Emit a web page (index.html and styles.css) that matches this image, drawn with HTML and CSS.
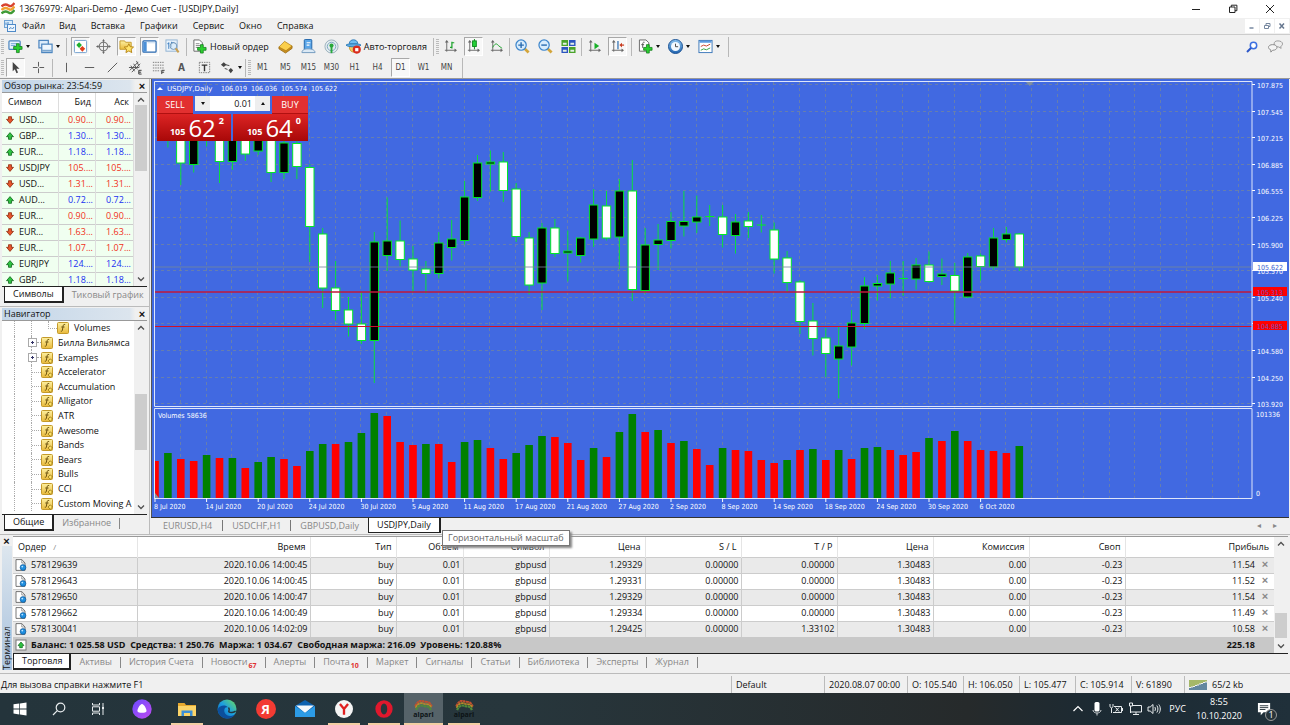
FILE: index.html
```html
<!DOCTYPE html>
<html lang="ru">
<head>
<meta charset="utf-8">
<title>13676979: Alpari-Demo - Демо Счет - [USDJPY,Daily]</title>
<link rel="stylesheet" href="styles.css">
</head>
<body>
<svg class="defs" aria-hidden="true">
  <defs>
    <linearGradient id="gy" x1="0" y1="0" x2="0" y2="1"><stop offset="0" stop-color="#fdf0a0"/><stop offset="1" stop-color="#e9b93a"/></linearGradient>
    <linearGradient id="gb" x1="0" y1="0" x2="0" y2="1"><stop offset="0" stop-color="#8cc4f0"/><stop offset="1" stop-color="#1f63b0"/></linearGradient>
    <linearGradient id="edge" x1="0" y1="1" x2="1" y2="0"><stop offset="0" stop-color="#0b59a8"/><stop offset=".5" stop-color="#1b9de2"/><stop offset="1" stop-color="#6fe05a"/></linearGradient>
    <linearGradient id="alice" x1="0" y1="0" x2="1" y2="1"><stop offset="0" stop-color="#6a4bff"/><stop offset="1" stop-color="#c04bf0"/></linearGradient>
    <symbol id="down" viewBox="0 0 8 8"><path d="M2.5.7h3v2.6h2L4 7.4.5 3.300h2z" fill="#e8542a" stroke="#8f2c10" stroke-width=".8" stroke-linejoin="round"/></symbol>
    <symbol id="up" viewBox="0 0 8 8"><path d="M2.500 7.300h3V4.700h2L4 .6.5 4.700h2z" fill="#2fc442" stroke="#11661c" stroke-width=".8" stroke-linejoin="round"/></symbol>
    <symbol id="fx" viewBox="0 0 12 12"><rect x=".5" y=".5" width="11" height="11" rx="1" fill="url(#gy)" stroke="#c49a2b"/><path d="M8.200 2.600c-1.800-.6-2 .6-2.200 2L5.400 8c-.2 1.200-.8 1.500-1.600 1.200M4.300 5h3.200" fill="none" stroke="#6e5410" stroke-width="1"/></symbol>
    <symbol id="fo" viewBox="0 0 12 12"><use href="#fx"/><path d="M9.300 6.800l2.200 2.200-2.200 2.200L7.100 9z" fill="#ffe468" stroke="#8a6a10" stroke-width=".8"/></symbol>
    <symbol id="doc" viewBox="0 0 12 12"><path d="M1 .6h5.800L10 4v7.400H1z" fill="#fff" stroke="#555" stroke-width=".8"/><path d="M6.800.6V4H10" fill="none" stroke="#777" stroke-width=".7"/><circle cx="8" cy="8.500" r="2.900" fill="#1f8fe0" stroke="#0c4e8a" stroke-width=".6"/><circle cx="7.300" cy="7.600" r=".9" fill="#bfe4ff"/></symbol>
    <symbol id="axes" viewBox="0 0 14 14"><path d="M3 2v10.500M1 11h11.500" stroke="#666"/><path d="M3 0L1 2.700h4zM14 11l-2.700-2v4z" fill="#666"/></symbol>
    <symbol id="wave" viewBox="0 0 14 14"><path d="M.5 4.500C3 2 5 2 7.500 3.500S11 4 13.500 1" stroke="#d8432f" stroke-width="2.400" fill="none"/><path d="M.5 8C3 5.500 5 5.500 7.500 7s3.500.5 6-2.500" stroke="#f0a030" stroke-width="2.400" fill="none"/><path d="M.5 11.500C3 9 5 9 7.500 10.500s3.500.5 6-2.500" stroke="#3f9a35" stroke-width="2.400" fill="none"/></symbol>
    <symbol id="alpari" viewBox="0 0 20 12"><path d="M1 7C4 0 8 0 10 1.500S16 0 19 7" stroke="#c05030" stroke-width="2.200" fill="none" stroke-dasharray="3 .5"/><path d="M1.500 8.500C4 2.800 8 2.800 10 4s6-1.200 8.500 4.500" stroke="#b88a2a" stroke-width="2" fill="none" stroke-dasharray="3 .5"/><path d="M2 11C4 5.500 8 5.500 10 6.500S16 5.500 18 11" stroke="#4f8a3a" stroke-width="2.400" fill="none" stroke-dasharray="3 .5"/></symbol>
  </defs>
</svg>

<header class="titlebar">
  <svg class="i14"><use href="#wave"/></svg>
  <h1>13676979: Alpari-Demo - Демо Счет - [USDJPY,Daily]</h1>
  <button aria-label="Свернуть"><svg class="i12" viewBox="0 0 12 12"><path d="M2 6.500h8" stroke="#222"/></svg></button>
  <button aria-label="Восстановить"><svg class="i12" viewBox="0 0 12 12"><path d="M2.500 4h5.500v5.500H2.500zM4.300 4V2.200h5.600v5.500H8" fill="none" stroke="#222"/></svg></button>
  <button aria-label="Закрыть"><svg class="i12" viewBox="0 0 12 12"><path d="M2 2l8 8M10 2l-8 8" stroke="#222"/></svg></button>
</header>

<nav class="menubar">
  <svg class="i12" viewBox="0 0 12 12"><rect x=".5" y=".5" width="8" height="7" fill="#d9ebfa" stroke="#6fa2d4"/><rect x="3.500" y="4.500" width="8" height="7" fill="#eef6fd" stroke="#4f8ac8"/><path d="M5 9l2-1.500 1.500 1.500L10 7M2 5V2.500M4 4V2" stroke="#4f8ac8" fill="none"/></svg>
  <button class="m1">Файл</button><button>Вид</button><button>Вставка</button><button>Графики</button><button>Сервис</button><button>Окно</button><button>Справка</button>
  <span class="grow"></span>
  <button class="mdi" aria-label="Свернуть окно"><svg class="i8" viewBox="0 0 8 8"><path d="M1.500 6h4" stroke="#7788a0" stroke-width="1.500"/></svg></button>
  <button class="mdi" aria-label="Восстановить окно"><svg class="i8" viewBox="0 0 8 8"><path d="M1.500 3.500h4v3h-4zM3 3V1.500h4v3H6" fill="none" stroke="#7788a0"/></svg></button>
  <button class="mdi" aria-label="Закрыть окно"><svg class="i8" viewBox="0 0 8 8"><path d="M1.500 1.500l4.500 5M6 1.500l-4.500 5" stroke="#66778f" stroke-width="1.500"/></svg></button>
</nav>

<div class="tools">
  <div class="bar">
    <i class="grip"></i>
    <button class="t dd" aria-label="Новый график"><svg class="i16" viewBox="0 0 16 16"><rect x="1" y="2" width="12" height="9" rx="1" fill="#eaf4fd" stroke="#4d86bf" stroke-width="1.300"/><path d="M3 5h7M3 7h5" stroke="#6aa0d4"/><path d="M9 5h3v3h3v3h-3v3.500H9V11H6V8h3z" fill="#2bd02f" stroke="#0f7a18" stroke-width=".8"/></svg><b></b></button>
    <button class="t dd w" aria-label="Профили"><svg class="i16" viewBox="0 0 16 16"><rect x="1" y="1.500" width="10" height="8" fill="#dcecfa" stroke="#4d86bf" stroke-width="1.300"/><rect x="4" y="5.500" width="11" height="9" fill="#eef6fd" stroke="#4d86bf" stroke-width="1.300"/><path d="M4 12.500h11" stroke="#7aa6d0" stroke-width="2"/></svg><b></b></button>
    <i class="sep"></i>
    <button class="t on" aria-label="Обзор рынка"><svg class="i16" viewBox="0 0 16 16"><rect x="1.500" y="1.500" width="13" height="13" rx="1" fill="#fff" stroke="#6d9ccc"/><path d="M3.500 6.500l3-3 3 3-3 3z" fill="#20b030"/><path d="M7 10.500l3-3 3 3-3 3z" fill="#e0401c"/></svg></button>
    <button class="t" aria-label="Окно данных"><svg class="i16" viewBox="0 0 16 16"><circle cx="8" cy="8" r="4.500" fill="none" stroke="#777" stroke-width="1.200"/><path d="M8 1v14M1 8h14" stroke="#777"/><path d="M8 0L6.500 2.500h3zM8 16l-1.500-2.500h3zM0 8l2.500-1.500v3zM16 8l-2.500-1.500v3z" fill="#666"/></svg></button>
    <button class="t on" aria-label="Навигатор"><svg class="i16" viewBox="0 0 16 16"><path d="M1 2h5l1 1.500h6V11H1z" fill="url(#gy)" stroke="#c49a2b"/><path d="M10.500 5l1.500 3.200 3.500.4-2.600 2.400.7 3.500-3.100-1.800-3.100 1.800.7-3.500-2.600-2.400 3.500-.4z" fill="#ffe36a" stroke="#b58413"/></svg></button>
    <button class="t on" aria-label="Терминал"><svg class="i16" viewBox="0 0 16 16"><rect x="1" y="2" width="14" height="12" rx="1" fill="#fff" stroke="#2868b0" stroke-width="1.300"/><path d="M1.500 3h3.500v10.500H1.500z" fill="#4b90d8"/><path d="M6 4h8" stroke="#c3daf0"/></svg></button>
    <button class="t" aria-label="Тестер стратегий"><svg class="i16" viewBox="0 0 16 16"><rect x="1" y="1" width="12" height="12" fill="#e8f2fb" stroke="#8fb2d2"/><path d="M4 3.500v7M7 3v6M2.500 5h2M7 4h3" stroke="#3f7fc0"/><circle cx="9" cy="7.500" r="3.600" fill="#d9ecfb" fill-opacity=".7" stroke="#6f93b4"/><path d="M11.500 10l3 4.300" stroke="#c9a052" stroke-width="2.200"/></svg></button>
    <i class="sep"></i>
    <button class="t txt" id="neworder"><svg class="i16" viewBox="0 0 16 16"><path d="M2 1h6l3 3v9H2z" fill="#fff" stroke="#666"/><path d="M4 5h4M4 7h5M4 9h3" stroke="#888"/><path d="M9 6h3v3h3v3h-3v3H9v-3H6V9h3z" fill="#2bd02f" stroke="#0f7a18" stroke-width=".8"/></svg>Новый ордер</button>
    <button class="t" aria-label="MetaEditor"><svg class="i16" viewBox="0 0 16 16"><path d="M1 8.500v2L8 15l7-5V7.500z" fill="#c98f1e" stroke="#94650c" stroke-width=".8"/><path d="M1 8.500L7 2.500l8 5L8.500 12.500z" fill="#fbcf4c" stroke="#a87612" stroke-width=".7"/></svg></button>
    <button class="t" aria-label="Сообщество"><svg class="i16" viewBox="0 0 16 16"><rect x="3.500" y=".5" width="8" height="11" rx="1" fill="#5ba6e8" stroke="#1e62a8"/><path d="M6 4h4M6 6.500h3" stroke="#fff" stroke-width="1.300"/><path d="M1 14.500c0-3 3-4 6.500-4s7.500 1 7.500 4z" fill="#dbe9f5" stroke="#6f97bd"/></svg></button>
    <button class="t" aria-label="Сигналы"><svg class="i16" viewBox="0 0 16 16"><circle cx="8" cy="8" r="7" fill="#e3ecef" stroke="#9ab0bc"/><circle cx="8" cy="8" r="4.500" fill="none" stroke="#7da4c0"/><circle cx="8" cy="7" r="2.200" fill="#28a83a"/><path d="M8 8v7" stroke="#28a83a" stroke-width="2"/></svg></button>
    <button class="t txt"><svg class="i16" viewBox="0 0 16 16"><path d="M3.500 8c0 8 9 8 9 0z" fill="#f3cc60" stroke="#b58413" stroke-width=".7"/><path d="M0 6.500c2-2 14-2 16 0-2 2.500-14 2.500-16 0z" fill="#5fb0e6" stroke="#2f7cb8"/><path d="M3.500 5c0-5.500 9-5.500 9 0z" fill="#6fbdf0" stroke="#2f7cb8"/><circle cx="11.500" cy="11.300" r="4.300" fill="#d92b1c"/><rect x="9.800" y="9.700" width="3.400" height="3.400" fill="#fff"/></svg>Авто-торговля</button>
    <i class="sep n"></i><i class="grip"></i>
    <button class="t" aria-label="Бары"><svg class="i16" viewBox="0 0 16 16"><use href="#axes" width="14" height="14" x="1" y="1"/><path d="M9.500 3v7M7.500 9h2M9.500 4h2.500" stroke="#18a028" stroke-width="1.300"/></svg></button>
    <button class="t on" aria-label="Свечи"><svg class="i16" viewBox="0 0 16 16"><use href="#axes" width="14" height="14" x="1" y="1"/><path d="M9 0v11" stroke="#108a1e"/><rect x="7" y="2" width="4" height="6" fill="#25d238" stroke="#108a1e"/></svg></button>
    <button class="t" aria-label="Линия"><svg class="i16" viewBox="0 0 16 16"><use href="#axes" width="14" height="14" x="1" y="1"/><path d="M4 9c2-4 4-5 6-2l4 3" stroke="#18a028" fill="none"/></svg></button>
    <i class="sep n"></i>
    <button class="t" aria-label="Увеличить"><svg class="i16" viewBox="0 0 16 16"><path d="M10 10l4.500 4.500" stroke="#d3a53a" stroke-width="3"/><circle cx="6.500" cy="6.500" r="5.500" fill="#d8ecfc" stroke="#3d86cc" stroke-width="1.300"/><path d="M6.500 3.500v6M3.500 6.500h6" stroke="#2a6cb0" stroke-width="1.500"/></svg></button>
    <button class="t" aria-label="Уменьшить"><svg class="i16" viewBox="0 0 16 16"><path d="M10 10l4.500 4.500" stroke="#d3a53a" stroke-width="3"/><circle cx="6.500" cy="6.500" r="5.500" fill="#d8ecfc" stroke="#3d86cc" stroke-width="1.300"/><path d="M3.500 6.500h6" stroke="#2a6cb0" stroke-width="1.500"/></svg></button>
    <button class="t" aria-label="Расположить окна"><svg class="i16" viewBox="0 0 16 16"><path d="M.5 1h7v6.500h-7zM8.500 8.500h7V15h-7z" fill="#4aa32a"/><path d="M8.500 1h7v6.500h-7zM.5 8.500h7V15h-7z" fill="#2c55c0"/><path d="M2 4h4v2H2zM10 4h4v2h-4zM2 11.500h4v2H2zM10 11.500h4v2h-4z" fill="#e3f0e6"/></svg></button>
    <i class="sep n"></i>
    <button class="t" aria-label="Автопрокрутка"><svg class="i16" viewBox="0 0 16 16"><use href="#axes" width="14" height="14" x="1" y="1"/><path d="M8 4l5 3.500L8 11z" fill="#18b028"/></svg></button>
    <button class="t on" aria-label="Сдвиг графика"><svg class="i16" viewBox="0 0 16 16"><use href="#axes" width="14" height="14" x="1" y="1"/><path d="M8.500 2v9" stroke="#2a6cb0" stroke-width="1.300"/><path d="M15 6.500h-3" stroke="#c83c20" stroke-width="1.300"/><path d="M12.800 4L10 6.500 12.800 9z" fill="#c83c20"/></svg></button>
    <i class="sep"></i>
    <button class="t dd" aria-label="Индикаторы"><svg class="i16" viewBox="0 0 16 16"><path d="M1.500 1h7l3 3v9h-10z" fill="#fff" stroke="#666"/><path d="M7 3.500C5 3 5 4.500 5 6v3.500M3.500 6h3" stroke="#555" fill="none"/><path d="M9 6h3v3h3v3h-3v3H9v-3H6V9h3z" fill="#2bd02f" stroke="#0f7a18" stroke-width=".8"/></svg><b></b></button>
    <button class="t dd" aria-label="Периоды"><svg class="i16" viewBox="0 0 16 16"><circle cx="8" cy="8" r="7.500" fill="url(#gb)" stroke="#174f92"/><circle cx="8" cy="8" r="4.800" fill="#f2f9ff"/><path d="M8 5v3.200h2.800" stroke="#444" fill="none"/></svg><b></b></button>
    <button class="t dd" aria-label="Шаблоны"><svg class="i16" viewBox="0 0 16 16"><rect x="1" y="1.500" width="14" height="13" fill="#fff" stroke="#3a76b8"/><path d="M1.500 3h13" stroke="#5b9be0" stroke-width="2"/><path d="M3 8l3-1.500 3 1 4-2" stroke="#c8402a" fill="none"/><path d="M3 12l3-1.500 3 1 4-2" stroke="#30a03a" fill="none"/></svg><b></b></button>
    <i class="end"></i>
    <span class="grow"></span>
    <button class="t" aria-label="Поиск"><svg class="i12" viewBox="0 0 12 12"><circle cx="7.500" cy="4.500" r="3.200" fill="#fff" stroke="#3b6fe0" stroke-width="1.500"/><path d="M5 7l-4 4" stroke="#2a55c8" stroke-width="2"/></svg></button>
    <button class="t chat" aria-label="Сообщения"><svg class="i16" viewBox="0 0 16 16"><path d="M10.500 2c3 0 5 1.300 5 3.300 0 1.300-1 2.200-2 2.700l.5 2-2.500-1.500c-3 0-5-1-5-3.200S8 2 10.500 2z" fill="#eee" stroke="#999"/><path d="M5 6c2.700 0 4.500 1.200 4.500 3S7.700 12 5 12l-2 2v-2.400C1.500 11 .5 10 .5 9c0-1.800 1.800-3 4.500-3z" fill="#f4f4f4" stroke="#888"/></svg></button>
  </div>
  <div class="bar two">
    <i class="grip"></i>
    <button class="t on" aria-label="Курсор"><svg class="i16" viewBox="0 0 16 16"><path d="M5 2v10l2.300-2.200L9 14l1.700-.8L9 9.300h3.300z" fill="#444"/></svg></button>
    <button class="t" aria-label="Перекрестие"><svg class="i16" viewBox="0 0 16 16"><path d="M8 2v5M8 9v5M2 8h5M9 8h5" stroke="#555"/></svg></button>
    <i class="sep"></i>
    <button class="t" aria-label="Вертикальная линия"><svg class="i16" viewBox="0 0 16 16"><path d="M8 3v10" stroke="#555"/></svg></button>
    <button class="t" aria-label="Горизонтальная линия"><svg class="i16" viewBox="0 0 16 16"><path d="M3 8h10" stroke="#555"/></svg></button>
    <button class="t" aria-label="Трендовая линия"><svg class="i16" viewBox="0 0 16 16"><path d="M3 13L13 3" stroke="#555"/></svg></button>
    <button class="t" aria-label="Канал"><svg class="i16" viewBox="0 0 16 16"><path d="M2 11L11 2M4 13l9-9M3 6l4 6M6 4l4 6M9 1l3 6M1 8h11" stroke="#555"/><path d="M14.500 11h-3v4h3M11.500 13h2.500" stroke="#333" fill="none"/></svg></button>
    <button class="t" aria-label="Фибоначчи"><svg class="i16" viewBox="0 0 16 16"><path d="M2 2.500h12M2 5.500h12M2 8.500h12M2 11.500h8" stroke="#777" stroke-dasharray="1.500 1"/><path d="M14.500 11h-3v4M11.500 13h2.500" stroke="#333" fill="none"/></svg></button>
    <button class="t a">A</button>
    <button class="t" aria-label="Метка"><svg class="i16" viewBox="0 0 16 16"><rect x="2.500" y="2.500" width="11" height="11" fill="none" stroke="#777" stroke-dasharray="1.500 1"/><path d="M5 5.500h6M8 5.500V12" stroke="#333" stroke-width="1.500"/></svg></button>
    <button class="t dd" aria-label="Стрелки"><svg class="i16" viewBox="0 0 16 16"><path d="M1 5l3-2.500L7 5 4 7.500zM9 11l2.500-2.500L14 11l-2.500 3z" fill="#444"/><path d="M6 5l4 1M5 9l3 1" stroke="#444"/></svg><b></b></button>
    <i class="sep n"></i><i class="grip"></i>
    <button class="t p">M1</button><button class="t p">M5</button><button class="t p">M15</button><button class="t p">M30</button><button class="t p">H1</button><button class="t p">H4</button><button class="t p on">D1</button><button class="t p">W1</button><button class="t p">MN</button>
    <i class="end"></i>
  </div>
</div>

<main class="work">
  <aside class="left">
    <section class="panel watch">
      <h2><span>Обзор рынка: 23:54:59</span><button aria-label="Закрыть">×</button></h2>
      <div class="box">
        <div class="clip">
        <table class="quotes">
          <thead><tr><th>Символ</th><th>Бид</th><th>Аск</th></tr></thead>
          <tbody>
            <tr class="dn"><td><svg class="i8"><use href="#down"/></svg>USD...</td><td>0.90...</td><td>0.90...</td></tr>
            <tr class="up"><td><svg class="i8"><use href="#up"/></svg>GBP...</td><td>1.30...</td><td>1.30...</td></tr>
            <tr class="up"><td><svg class="i8"><use href="#up"/></svg>EUR...</td><td>1.18...</td><td>1.18...</td></tr>
            <tr class="dn"><td><svg class="i8"><use href="#down"/></svg>USDJPY</td><td>105....</td><td>105....</td></tr>
            <tr class="dn"><td><svg class="i8"><use href="#down"/></svg>USD...</td><td>1.31...</td><td>1.31...</td></tr>
            <tr class="up"><td><svg class="i8"><use href="#up"/></svg>AUD...</td><td>0.72...</td><td>0.72...</td></tr>
            <tr class="dn"><td><svg class="i8"><use href="#down"/></svg>EUR...</td><td>0.90...</td><td>0.90...</td></tr>
            <tr class="dn"><td><svg class="i8"><use href="#down"/></svg>EUR...</td><td>1.63...</td><td>1.63...</td></tr>
            <tr class="dn"><td><svg class="i8"><use href="#down"/></svg>EUR...</td><td>1.07...</td><td>1.07...</td></tr>
            <tr class="up"><td><svg class="i8"><use href="#up"/></svg>EURJPY</td><td>124....</td><td>124....</td></tr>
            <tr class="up"><td><svg class="i8"><use href="#up"/></svg>GBP...</td><td>1.18...</td><td>1.18...</td></tr>
          </tbody>
        </table>
        </div>
        <div class="scroll s1"><svg class="i8" viewBox="0 0 8 8"><path d="M1 5.500l3-3 3 3" fill="none" stroke="#505050" stroke-width="1.300"/></svg><i></i><svg class="i8" viewBox="0 0 8 8"><path d="M1 2.500l3 3 3-3" fill="none" stroke="#505050" stroke-width="1.300"/></svg></div>
      </div>
      <div class="tabs"><button class="cur">Символы</button><button>Тиковый график</button></div>
    </section>
    <section class="panel navi">
      <h2><span>Навигатор</span><button aria-label="Закрыть">×</button></h2>
      <div class="box">
        <ul class="tree">
          <li class="sub"><i></i><u></u><em></em><svg class="i12"><use href="#fx"/></svg>Volumes</li>
          <li class="exp"><i></i><u></u><svg class="i12"><use href="#fx"/></svg>Билла Вильямса</li>
          <li class="exp"><i></i><u></u><svg class="i12"><use href="#fo"/></svg>Examples</li>
          <li><i></i><u></u><svg class="i12"><use href="#fo"/></svg>Accelerator</li>
          <li><i></i><u></u><svg class="i12"><use href="#fo"/></svg>Accumulation</li>
          <li><i></i><u></u><svg class="i12"><use href="#fo"/></svg>Alligator</li>
          <li><i></i><u></u><svg class="i12"><use href="#fo"/></svg>ATR</li>
          <li><i></i><u></u><svg class="i12"><use href="#fo"/></svg>Awesome</li>
          <li><i></i><u></u><svg class="i12"><use href="#fo"/></svg>Bands</li>
          <li><i></i><u></u><svg class="i12"><use href="#fo"/></svg>Bears</li>
          <li><i></i><u></u><svg class="i12"><use href="#fo"/></svg>Bulls</li>
          <li><i></i><u></u><svg class="i12"><use href="#fo"/></svg>CCI</li>
          <li><i></i><u></u><svg class="i12"><use href="#fo"/></svg>Custom Moving A</li>
        </ul>
        <div class="scroll s2"><svg class="i8" viewBox="0 0 8 8"><path d="M1 5.500l3-3 3 3" fill="none" stroke="#505050" stroke-width="1.300"/></svg><i></i><svg class="i8" viewBox="0 0 8 8"><path d="M1 2.500l3 3 3-3" fill="none" stroke="#505050" stroke-width="1.300"/></svg></div>
      </div>
      <div class="tabs"><button class="cur">Общие</button><button>Избранное</button><i class="bar1"></i></div>
    </section>
  </aside>

  <section class="charts">
    <div class="chart" id="chart">
      <svg id="plot" role="img" aria-label="USDJPY, Daily"></svg>
      <form class="trade">
        <button type="button" class="sell">SELL</button>
        <div class="lot"><button type="button" aria-label="Меньше"><b></b></button><input aria-label="Объем" value="0.01"><button type="button" aria-label="Больше"><b class="u"></b></button></div>
        <button type="button" class="buy">BUY</button>
        <button type="button" class="price"><small>105</small><strong>62</strong><sup>2</sup></button>
        <button type="button" class="price"><small>105</small><strong>64</strong><sup>0</sup></button>
      </form>
    </div>
    <div class="ctabs">
      <button>EURUSD,H4</button><i></i><button>USDCHF,H1</button><i></i><button>GBPUSD,Daily</button><button class="cur">USDJPY,Daily</button>
      <span class="grow"></span><span class="arr">◂</span><span class="arr">▸</span>
      <div class="tip" role="tooltip">Горизонтальный масштаб</div>
    </div>
  </section>
</main>

<section class="terminal">
  <div class="side"><button aria-label="Закрыть">×</button><span>Терминал</span></div>
  <div class="tmain">
    <div class="box">
      <table class="orders">
        <colgroup><col class="c124"><col class="c173"><col class="c86"><col class="c67"><col class="c86"><col class="c96"><col class="c96"><col class="c96"><col class="c96"><col class="c96"><col class="c96"><col></colgroup>
        <thead><tr><th>Ордер &nbsp; <i>/</i></th><th>Время</th><th>Тип</th><th>Объем</th><th>Символ</th><th>Цена</th><th>S / L</th><th>T / P</th><th>Цена</th><th>Комиссия</th><th>Своп</th><th>Прибыль</th></tr></thead>
        <tbody>
          <tr><td><svg class="i12"><use href="#doc"/></svg>578129639</td><td>2020.10.06 14:00:45</td><td>buy</td><td>0.01</td><td>gbpusd</td><td>1.29329</td><td>0.00000</td><td>0.00000</td><td>1.30483</td><td>0.00</td><td>-0.23</td><td>11.54<button aria-label="Закрыть ордер">×</button></td></tr>
          <tr><td><svg class="i12"><use href="#doc"/></svg>578129643</td><td>2020.10.06 14:00:45</td><td>buy</td><td>0.01</td><td>gbpusd</td><td>1.29331</td><td>0.00000</td><td>0.00000</td><td>1.30483</td><td>0.00</td><td>-0.23</td><td>11.52<button aria-label="Закрыть ордер">×</button></td></tr>
          <tr><td><svg class="i12"><use href="#doc"/></svg>578129650</td><td>2020.10.06 14:00:47</td><td>buy</td><td>0.01</td><td>gbpusd</td><td>1.29329</td><td>0.00000</td><td>0.00000</td><td>1.30483</td><td>0.00</td><td>-0.23</td><td>11.54<button aria-label="Закрыть ордер">×</button></td></tr>
          <tr><td><svg class="i12"><use href="#doc"/></svg>578129662</td><td>2020.10.06 14:00:49</td><td>buy</td><td>0.01</td><td>gbpusd</td><td>1.29334</td><td>0.00000</td><td>0.00000</td><td>1.30483</td><td>0.00</td><td>-0.23</td><td>11.49<button aria-label="Закрыть ордер">×</button></td></tr>
          <tr><td><svg class="i12"><use href="#doc"/></svg>578130041</td><td>2020.10.06 14:02:09</td><td>buy</td><td>0.01</td><td>gbpusd</td><td>1.29425</td><td>0.00000</td><td>1.33102</td><td>1.30483</td><td>0.00</td><td>-0.23</td><td>10.58<button aria-label="Закрыть ордер">×</button></td></tr>
        </tbody>
        <tfoot><tr><td colspan="11"><svg class="i12 bal" viewBox="0 0 12 12"><rect x="1" y="1" width="10" height="10" fill="#fff" stroke="#777"/><use href="#up" x="2.500" y="2.500" width="7" height="7"/></svg>Баланс: 1 025.58 USD&nbsp; Средства: 1 250.76&nbsp; Маржа: 1 034.67&nbsp; Свободная маржа: 216.09&nbsp; Уровень: 120.88%</td><td>225.18</td></tr></tfoot>
      </table>
      <div class="scroll s3"><svg class="i8" viewBox="0 0 8 8"><path d="M1 5.500l3-3 3 3" fill="none" stroke="#505050" stroke-width="1.300"/></svg><i></i><svg class="i8" viewBox="0 0 8 8"><path d="M1 2.500l3 3 3-3" fill="none" stroke="#505050" stroke-width="1.300"/></svg></div>
    </div>
    <div class="tabs ttabs"><button class="cur">Торговля</button><button>Активы</button><button>История Счета</button><button>Новости<sub>67</sub></button><button>Алерты</button><button>Почта<sub>10</sub></button><button>Маркет</button><button>Сигналы</button><button>Статьи</button><button>Библиотека</button><button>Эксперты</button><button>Журнал</button></div>
  </div>
</section>

<footer class="status">
  <span class="grow">Для вызова справки нажмите F1</span>
  <span class="w93">Default</span><span class="w83">2020.08.07 00:00</span><span class="w56">O: 105.540</span><span class="w56">H: 106.050</span><span class="w56">L: 105.477</span><span class="w56">C: 105.914</span><span class="w54">V: 61890</span>
  <span class="w105"><svg class="net" viewBox="0 0 19 10"><path d="M1 0v7M3 0v6.500M5 0v6M7 0v5M9 0v4.500M11 0v3.500M13 0v3M15 0v2M17 0v1.500" stroke="#7d9a20" stroke-width="1.300"/><path d="M1 8v2M3 7.500V10M5 7v3M7 6v4M9 5.500V10M11 4.500V10M13 4v6M15 3v7M17 2.500V10" stroke="#174f74" stroke-width="1.300"/></svg>65/2 kb</span>
</footer>

<nav class="taskbar">
  <button aria-label="Пуск"><svg class="i14" viewBox="0 0 14 14"><path d="M.5 2.300l5.800-.8v5H.5zM7 1.400L13.500.5v6H7zM.5 7.400h5.800v5L.5 11.600zM7 7.400h6.500v6L7 12.500z" fill="#fff"/></svg></button>
  <button aria-label="Поиск"><svg class="i14" viewBox="0 0 14 14"><circle cx="8.500" cy="5.500" r="4.300" fill="none" stroke="#e8ecee" stroke-width="1.200"/><path d="M5.300 8.700L1 13" stroke="#e8ecee" stroke-width="1.200"/></svg></button>
  <button aria-label="Представление задач"><svg class="i14" viewBox="0 0 14 14"><path d="M1.500 1v2h7V1M1.500 13v-2h7v2M1.500 4.800h7v4.400h-7zM12 1v12" fill="none" stroke="#e8ecee"/><path d="M11 5h2v2h-2z" fill="#e8ecee"/></svg></button>
  <button class="k50" aria-label="Алиса"><svg class="i20" viewBox="0 0 20 20"><circle cx="10" cy="10" r="9.700" fill="url(#alice)"/><path d="M10 5c2 0 5 5.500 4.500 7.300-.5 2-8.500 2-9 0C5 10.500 8 5 10 5z" fill="#fff"/></svg></button>
  <button class="run" aria-label="Проводник"><svg class="i18" viewBox="0 0 18 18"><path d="M0 3h6.500l1.500 2h10v11H0z" fill="#e7a92f"/><path d="M0 6h18v10H0z" fill="#fcd468"/><path d="M3.500 16v-5.500h11V16H12v-3H6v3z" fill="#3d8fd6"/></svg></button>
  <button aria-label="Edge"><svg class="i20" viewBox="0 0 20 20"><circle cx="10" cy="10" r="9.500" fill="url(#edge)"/><path d="M8 9c-2 3 0 8 5.500 8 2 0 4-1 5-2.500A9.500 9.500 0 0 1 10 19.500C5 19.500 1 15.500.6 10.500 3 5.500 9 6 10.800 8.300 9.500 8 8.500 8.300 8 9z" fill="#0c4f9c"/><path d="M11.500 8.500c1.500 1.500.5 3.500.3 4.200 1.500 1.300 5 .8 6.800-.5" stroke="#26343b" stroke-width="1.500" fill="none"/></svg></button>
  <button class="ya"><span>Я</span></button>
  <button aria-label="Почта"><svg class="i20" viewBox="0 0 20 20"><path d="M0 7l10-6 10 6v11H0z" fill="#0d62b0"/><path d="M1 6.500h18L10 14z" fill="#f4f8fb"/><path d="M0 7l10 7 10-7v11H0z" fill="#2c9be6"/></svg></button>
  <button class="run" aria-label="Яндекс.Браузер"><svg class="i18" viewBox="0 0 20 20"><circle cx="10" cy="10" r="10" fill="#f5f5f5"/><path d="M5.500 4.500L10 10l4.500-5.500M10 10v6.500" stroke="#e02020" stroke-width="2.600" fill="none"/></svg></button>
  <button class="run" aria-label="Opera"><svg class="i18" viewBox="0 0 20 20"><path fill-rule="evenodd" d="M10 .2a9.600 9.800 0 1 0 0 19.600 9.600 9.800 0 1 0 0-19.600zm0 3.800c2.200 0 3.600 2.600 3.600 6s-1.400 6-3.600 6-3.600-2.600-3.600-6S7.800 4 10 4z" fill="#e0182d"/></svg></button>
  <button class="run cur"><svg class="alp"><use href="#alpari"/></svg>alpari</button>
  <button class="run last"><svg class="alp"><use href="#alpari"/></svg>alpari</button>
  <span class="grow"></span>
  <span class="tray"><svg class="i12" viewBox="0 0 12 12"><path d="M1.500 8L6 3.500 10.500 8" fill="none" stroke="#fff" stroke-width="1.200"/></svg></span>
  <span class="tray"><svg class="i14" viewBox="0 0 14 14"><rect x="4.500" y="0" width="5" height="9.500" rx="1.500" fill="#fff"/><path d="M3 8c0 4 8 4 8 0M7 11v2.500" fill="none" stroke="#cfd4d7"/></svg></span>
  <span class="tray"><svg class="i14" viewBox="0 0 14 14"><path d="M5 4.500h7.500v6H4M13.500 6v3M6.500 5.500l3.500 4M10 5.500L6.500 9.500M2.500 6v5M1 2v2c0 2.500 3 2.500 3 0V2" fill="none" stroke="#e8ecee"/></svg></span>
  <span class="tray"><svg class="i14" viewBox="0 0 14 14"><path d="M4 3.500h9.500v6.500H3M8 10v2.500M5 12.500h6M1.500 1h3v3h-3zM2.500 4v7" fill="none" stroke="#e8ecee"/></svg></span>
  <span class="tray"><svg class="i14" viewBox="0 0 14 14"><path d="M1 5h2.200L6 2.500v9L3.200 9H1z" fill="none" stroke="#e8ecee"/><path d="M7.800 5c.8 1 .8 3 0 4M9.800 3.500c1.500 2 1.500 5 0 7M11.800 2.500c2 2.500 2 6.500 0 9" fill="none" stroke="#e8ecee"/></svg></span>
  <span class="lang">РУС</span>
  <time>8:55<br>10.10.2020</time>
  <button class="note" aria-label="Уведомления"><svg class="i16" viewBox="0 0 16 16"><path d="M1 1h13v10H7l-3 3v-3H1z" fill="#fff"/><path d="M3 4h9M3 6h9M3 8h6" stroke="#26343b"/></svg><span>1</span></button>
</nav>
<script src="chart.js"></script>
</body>
</html>
```
FILE: styles.css
```css
* { box-sizing: border-box; }
html, body { margin: 0; height: 100%; }
body {
  display: flex; flex-direction: column; min-height: 100vh; overflow: hidden;
  background: #f0f0f0; color: #111;
  font: 9px/14px "Open Sans", "Noto Sans", sans-serif;
}
button { font: inherit; color: inherit; background: none; border: 0; padding: 0; margin: 0; }
svg { display: block; flex: none; }
h1, h2 { margin: 0; font: inherit; }
i, em, u { font-style: normal; text-decoration: none; }
.defs { position: absolute; width: 0; height: 0; }
.i8 { width: 8px; height: 8px; } .i12 { width: 12px; height: 12px; } .i14 { width: 14px; height: 14px; }
.i16 { width: 15px; height: 15px; } .i18 { width: 18px; height: 18px; } .i20 { width: 20px; height: 20px; }
.grow { flex: 1; }

.titlebar { display: flex; align-items: center; height: 18px; background: #fff; padding-left: 1px; }
.titlebar h1 { flex: 1; margin-left: 4px; }
.titlebar button { width: 37px; display: flex; justify-content: center; }
.titlebar button:last-child { margin-right: 2px; }
.menubar { display: flex; align-items: center; height: 17px; padding-left: 4px; border-bottom: 1px solid #ccc; }
.menubar button { margin-right: 15px; }
.menubar .m1 { margin: 0 14px 0 6px; }
.menubar .mdi { width: 14px; height: 14px; margin: 0 1px 0 0; background: #fff; display: flex; align-items: center; justify-content: center; }

.tools { padding-top: 1px; border-bottom: 1px solid #999; }
.bar { display: flex; align-items: center; height: 21px; }
.t { width: 19px; height: 19px; margin: 0 2px; display: flex; align-items: center; justify-content: center; flex: none; border: 1px solid transparent; }
.t.on { background: #f8f8f8; border-color: #a8a8a8 #fff #fff #a8a8a8; }
.t.dd { width: 26px; gap: 3px; }
.t.txt { width: auto; gap: 3px; padding: 0 2px 0 0; }
.t.dd b, .lot b { border: 2px solid transparent; border-top: 3px solid #111; border-bottom: 0; }
.t.p, .t.a { font: 8px/10px "DejaVu Sans Condensed", "DejaVu Sans", sans-serif; color: #444; }
.t.a { font-size: 10px; font-weight: bold; color: #555; }
.two .dd { margin: 0 0 0 2px; }
.chat { margin: 0 5px 0 3px; }
.grip { width: 3px; height: 16px; margin: 0 0 0 1px; background: repeating-linear-gradient(#bbb 0 1px, #f0f0f0 1px 2px); }
.sep { width: 1px; height: 18px; background: #b8b8b8; margin: 0 2px; }
.sep.n { margin: 0 1px; }
.end { width: 1px; height: 20px; background: #b8b8b8; margin-left: 4px; }

.work { flex: 1; display: flex; min-height: 0; }
.left { width: 150px; flex: none; display: flex; flex-direction: column; border-right: 1px solid #bbb; }
.panel { display: flex; flex-direction: column; padding: 1px 2px 3px; }
.panel + .panel { border-top: 1px solid #bbb; }
.navi { flex: 1; min-height: 0; }
.panel h2 { display: flex; height: 12px; line-height: 12px; align-items: center; padding-left: 2px; background: linear-gradient(90deg, #c2d5e8, #dce5ee 88%, #f0f0f0 92%); }
.panel h2 span { flex: 1; white-space: nowrap; }
.panel h2 button, .side button { font: bold 11px/10px "Liberation Sans", sans-serif; width: 10px; }
.box { display: flex; background: #fff; border-top: 1px solid #999; overflow: hidden; min-height: 0; }
.clip { flex: 1; overflow: hidden; }
.watch .box { height: 194px; }
.navi .box { flex: 1; }
.quotes { width: 100%; table-layout: fixed; border-collapse: collapse; }
.quotes th { font-weight: normal; text-align: right; height: 19px; padding: 0 4px; }
.quotes th:first-child { width: 56px; text-align: left; padding-left: 6px; }
.quotes th:last-child { width: 38px; }
.quotes th, .quotes td { border-right: 1px solid #ddd; }
.quotes td { height: 16px; padding: 0 2px 0 0; line-height: 14px; text-align: right; background: #f0fff0; border-top: 1px solid #ccc; white-space: nowrap; overflow: hidden; }
.quotes td:first-child { text-align: left; padding-left: 4px; }
.quotes td svg { display: inline-block; vertical-align: -1px; margin-right: 5px; }
.dn td + td { color: #f03020; } .up td + td { color: #2030f0; }
.scroll { width: 13px; flex: none; background: #f0f0f0; display: flex; flex-direction: column; align-items: center; justify-content: space-between; padding: 3px 0; }
.scroll i { width: 12px; background: #cdcdcd; }
.s1 i { height: 66px; margin-bottom: 104px; }
.s2 i { height: 56px; margin-top: 56px; margin-bottom: 48px; }
.s3 { width: 14px; }
.s3 i { height: 25px; margin-top: 60px; }
.tabs { display: flex; border-top: 1px solid #222; height: 17px; color: #888; white-space: nowrap; overflow: hidden; flex: none; }
.tabs button { padding: 0 8px 1px; }
.tabs .cur { background: #fff; color: #111; border: 1px solid #222; border-top: 0; border-width: 0 2px 2px 1px; margin-left: 2px; padding: 0 8px; }
.bar1 { width: 1px; height: 11px; background: #888; align-self: center; }

.tree { flex: 1; list-style: none; margin: 0; padding: 0 0 3px 12px; display: grid; grid-template-rows: repeat(13, 1fr); overflow: hidden; white-space: nowrap; }
.tree li { display: flex; align-items: center; min-height: 0; }
.tree svg { margin-right: 5px; }
.tree i { width: 17px; align-self: stretch; border-left: 1px dotted #aaa; }
.tree u { width: 10px; align-self: stretch; border-left: 1px dotted #aaa; display: flex; align-items: center; }
.tree u::after { content: ""; flex: 1; border-top: 1px dotted #aaa; }
.tree .sub u::after { display: none; }
.tree em { width: 9px; height: 8px; margin-left: 7px; align-self: flex-start; border: 1px dotted #aaa; border-width: 0 0 1px 1px; }
.tree .exp u::before { content: ""; width: 7px; height: 7px; margin-left: -4px; border: 1px solid #aaa; background: linear-gradient(#336, #336) center / 3px 1px no-repeat, linear-gradient(#336, #336) center / 1px 3px no-repeat, #fff; }

.charts { flex: 1; min-width: 0; margin: 0 1px 0 1px; display: flex; flex-direction: column; }
.chart { position: relative; background: #4169e1; border-left: 1px solid #555; flex: 1; overflow: hidden; }
.chart > svg { width: 100%; height: 437px; }
.chart text { font: 7px "DejaVu Sans Condensed", "DejaVu Sans", sans-serif; fill: #fff; }
.chart .wide { font-family: "DejaVu Sans", sans-serif; }
.chart .tag { fill: #3a5fd0; }
.chart .level { fill: #7a50b8; }
.trade { position: absolute; left: 5px; top: 17px; width: 151px; display: grid; grid-template-columns: 36px 38px 2px 39px 36px; background: #4169e1; color: #fff; }
.sell, .buy { height: 18px; background: #e23030; border-bottom: 1px solid #b01010; }
.lot { grid-column: 2 / 5; display: flex; margin: 0 2px 3px; background: #fff; }
.lot button { width: 15px; background: #eee; display: flex; align-items: center; justify-content: center; }
.lot b.u { transform: rotate(180deg); }
.lot input { flex: 1; min-width: 0; border: 0; padding: 0 3px; text-align: right; font: inherit; color: #111; }
.price { grid-column: 1 / 3; height: 27px; display: flex; justify-content: flex-end; align-items: flex-end; padding: 0 7px 0 0; background: linear-gradient(#dc2424, #a80808); }
.price + .price { grid-column: 4 / 6; }
.price small { font: bold 9px/18px "Open Sans", sans-serif; margin-right: 3px; }
.price strong { font: 24px/27px "Open Sans", sans-serif; }
.price sup { font: bold 9px/14px "Open Sans", sans-serif; align-self: flex-start; margin-left: 3px; }
.ctabs { position: relative; display: flex; align-items: flex-start; height: 17px; border-top: 1px solid #333; color: #888; }
.ctabs button { padding: 0 9px; height: 15px; }
.ctabs button:first-child { padding: 0 10px 0 12px; }
.ctabs i { width: 1px; height: 11px; margin-top: 2px; background: #777; }
.ctabs .cur { background: #fff; color: #111; border: 1px solid #222; border-width: 0 2px 1px 1px; padding: 0 8px; }
.arr { width: 16px; font-size: 8px; }
.tip { position: absolute; left: 291px; top: 12px; z-index: 2; background: #fff; color: #666; border: 1px solid #777; box-shadow: 2px 2px 2px #888; padding: 0 5px; height: 16px; white-space: nowrap; }

.terminal { display: flex; border-top: 1px solid #bbb; padding: 1px 2px 0 0; }
.side { width: 13px; flex: none; display: flex; flex-direction: column; align-items: center; }
.side span { flex: 1; width: 10px; background: linear-gradient(#a9c2dd, #dde6ee); writing-mode: vertical-rl; transform: rotate(180deg); line-height: 10px; }
.tmain { flex: 1; min-width: 0; }
.orders { flex: 1; table-layout: fixed; border-collapse: collapse; width: 100%; }
.orders th, .orders td { text-align: right; padding: 0 2px; font-weight: normal; border-right: 1px solid #ccc; white-space: nowrap; }
.orders th { height: 20px; padding-right: 4px; border-right-color: #e5e5e5; }
.orders th:first-child, .orders td:first-child { text-align: left; }
.orders th:first-child { padding-left: 5px; }
.orders th i { color: #888; font-size: 8px; }
.orders tbody td { height: 16px; line-height: 14px; border-top: 1px solid #ccc; }
.orders tbody tr:nth-child(odd) { background: #eaeaea; }
.orders td:last-child, .orders th:last-child { border-right: 0; }
.orders th:last-child { padding-right: 5px; }
.orders tbody td:last-child { padding-right: 4px; }
.orders td svg { display: inline-block; vertical-align: -3px; margin-right: 4px; }
.orders td button { width: 10px; margin-left: 5px; color: #888; font: bold 11px/12px "Liberation Sans", sans-serif; }
.orders tfoot td { height: 16px; background: #c8c8c8; font-weight: bold; border: 0; }
.orders tfoot td:last-child { padding-right: 19px; }
.c124 { width: 124px; } .c173 { width: 173px; } .c86 { width: 86px; } .c67 { width: 67px; } .c96 { width: 96px; }
.ttabs button { position: relative; padding: 0 9px 1px 8px; }
.ttabs .cur { padding: 0 7px 0 8px; margin: 0; }
.ttabs button:not(.cur)::after { content: ""; position: absolute; right: 0; top: 3px; width: 1px; height: 11px; background: #888; }
.ttabs sub { color: #e03030; font: bold 7px/1px "Open Sans", sans-serif; vertical-align: -3px; margin-left: 1px; }

.status { display: flex; margin-top: 3px; height: 20px; border-top: 1px solid #bbb; line-height: 17px; padding: 2px 0 0 1px; white-space: nowrap; }
.status span + span { border-left: 1px solid #bbb; padding-left: 4px; }
.w93 { width: 93px; } .w83 { width: 83px; } .w56 { width: 56px; } .w54 { width: 53px; } .w105 { width: 106px; display: flex; gap: 4px; align-items: center; }
.net { width: 19px; height: 10px; }

.taskbar { display: flex; align-items: stretch; height: 32px; background: linear-gradient(90deg, #24343b, #27363c 40%, #262a2b 75%, #1c2a33 85%, #20303a); color: #fff; }
.taskbar button { display: flex; align-items: center; justify-content: center; width: 39px; position: relative; }
.taskbar .k50 { width: 50px; }
.taskbar .run { border-bottom: 2px solid #f3cfa4; width: 32px; margin: 0 4px; padding-top: 2px; }
.taskbar .cur { width: 39px; margin: 0 1px 0 0; background: #566369; }
.taskbar .cur, .taskbar .last { flex-direction: column; font: bold 7px/8px "Open Sans", sans-serif; color: #0c1316; }
.alp { width: 19px; height: 11px; }
.ya span { width: 20px; height: 20px; border-radius: 50%; background: #f33b33; font: bold 13px/20px "Open Sans", sans-serif; text-align: center; }
.tray { width: 19px; display: flex; align-items: center; justify-content: center; }
.lang { align-self: center; margin: 0 10px 0 6px; }
time { text-align: center; align-self: center; width: 46px; }
.taskbar .note { width: 36px; margin: 0 8px 0 4px; }
.note span { position: absolute; left: 19px; top: 16px; width: 12px; height: 12px; border-radius: 50%; border: 1px solid #999; background: #26343b; font: 9px/10px "Open Sans", sans-serif; text-align: center; }
```
FILE: chart.js
```js
// Candles: [high, body top, body bottom, low, kind]; w = bearish, b = bullish, l = flat
var candles = [
  null, [60,60,60,68.5,'l'], [60,60,84,106,'w'], [60,60,85.500,93.500,'b'], [60,60,60,67.500,'l'],
  [60,60,82.500,104,'w'], [60,60,82.500,91,'b'], [60,60,75,82,'w'], [60,60,72,76,'b'], [60,60,93.500,103,'w'],
  [60,64,93.500,100,'b'], [60,64.500,87.500,100,'w'], [85,88.500,147.500,183,'w'], [149,155,209,229,'w'], [182,209,231.500,241.500,'w'],
  [218,231,245,257.500,'w'], [213.500,245,261.500,265,'w'], [153,163,261.500,304,'b'], [118.500,162,176.500,192,'b'], [141.500,162,180.500,187.500,'w'],
  [167,180,191,212.500,'w'], [182,190,194.500,214.500,'w'], [153,164,194.500,199.500,'b'], [141,160,168.500,181.500,'b'], [102,118,161.500,165.500,'b'],
  [76,84,118.500,122,'b'], [71.500,83,85,112.500,'b'], [73,83,111.500,123,'w'], [104,110,157.500,163,'w'], [153,159,206,215.500,'w'],
  [144,149,204,231,'b'], [140,149,174.500,178,'w'], [151.500,172,174,202.500,'b'], [158,159,176.500,183.500,'b'], [110,126,160,168,'b'],
  [112,127,159,161.500,'w'], [100,112,158,190,'b'], [81,112,210.500,222,'w'], [149,166,211.500,215,'b'], [145,161,165.500,191,'b'],
  [133,142.500,161.500,169.500,'b'], [112,142.500,147,157.500,'b'], [116.500,138,143,154,'b'], [126,137.500,137.500,147,'l'], [126,138,155.500,168.500,'w'],
  [135,143,156.500,174.500,'b'], [133,142,147.500,159,'w'], [136,146,146,153.500,'l'], [143.500,151,180,194.500,'w'], [172,179,203.500,213.500,'w'],
  [201,203,242.500,255,'w'], [224,242,259.500,276.500,'w'], [249,259,274.500,298,'w'], [248,267,280,319.500,'b'], [231,244,268,286.500,'b'],
  [198,207,244.500,250,'b'], [196,204.500,207,221.500,'b'], [182,194,205,219.500,'b'], [182,199.500,199.500,217,'l'], [179,186,200,210.500,'b'],
  [172.500,186,202.500,204,'w'], [179.500,195,197.500,206,'b'], [184,196.500,212,244.500,'w'], [174,178,218,219,'b'], [174.500,177,187.500,201.500,'w'],
  [149,159,188,191,'b'], [148,155,160.500,163.500,'b'], [154,155,188,192,'w']
];
// Volume heights, negative when volume fell against the previous bar
var volumes = [-37,45,-39,-37,43,-40,40,-30,36,41,-39,-32,47,54,-54,56,65,85,-82,-56,-53,54,-54,-36,56,58,-50,-39,45,53,62,-61,-55,-38,50,-41,66,84,-66,68,-55,57,-49,-33,50,-48,-47,-38,-35,38,-48,49,-38,48,-39,50,51,-48,-43,-46,60,-57,67,-57,-48,-47,-45,52];
var dates = ['8 Jul 2020','14 Jul 2020','20 Jul 2020','24 Jul 2020','30 Jul 2020','5 Aug 2020','11 Aug 2020','17 Aug 2020','21 Aug 2020','27 Aug 2020','2 Sep 2020','8 Sep 2020','14 Sep 2020','18 Sep 2020','24 Sep 2020','30 Sep 2020','6 Oct 2020'];
var prices = ['107.875','107.545','107.215','106.885','106.555','106.225','105.900','105.570','105.240','','104.580','104.250','103.920'];

function draw() {
  var svg = document.getElementById('plot');
  var w = svg.clientWidth, right = w - 37, step = 12.9, x0 = 3, out = '';
  function line(x1, y1, x2, y2, c, extra) { out += '<line x1="' + x1 + '" y1="' + y1 + '" x2="' + x2 + '" y2="' + y2 + '" stroke="' + c + '" ' + (extra || '') + '/>'; }
  function rect(x, y, rw, h, c, extra) { out += '<rect x="' + x + '" y="' + y + '" width="' + rw + '" height="' + h + '" fill="' + c + '" ' + (extra || '') + '/>'; }
  function text(x, y, s, cls) { out += '<text x="' + x + '" y="' + y + '" class="' + (cls || '') + '">' + s + '</text>'; }
  var dash = 'stroke-dasharray="3 3" opacity=".7"';
  for (var i = 2; x0 + i * step < right; i += 2) { line(Math.round(x0 + i * step) - .5, 3, Math.round(x0 + i * step) - .5, 419, '#778899', dash); }
  prices.forEach(function (p, k) {
    var y = Math.round(6 + k * 26.6);
    line(3, y - .5, right, y - .5, '#778899', dash);
    line(right, y - .5, right + 3, y - .5, '#fff');
    text(right + 5, y + 2.500, p);
  });
  volumes.forEach(function (v, k) {
    var h = Math.abs(v), x = x0 + k * step;
    rect(k ? x - 3.8 : 3, 419 - h, k ? 7.6 : 3.800, h, v > 0 ? '#008000' : '#ff0000');
  });
  candles.forEach(function (c, k) {
    if (!c) return;
    var x = x0 + k * step;
    line(x, c[0], x, c[3], '#0ade3c');
    if (c[4] === 'l') line(x - 4.500, c[1], x + 4.500, c[1], '#00f020');
    else rect(x - 4.200, c[1], 8.400, c[2] - c[1], c[4] === 'w' ? '#fff' : '#000', 'stroke="#00e828"');
  });
  line(3, 188, right, 188, '#778899', 'opacity=".8"');
  line(3, 213, right, 213, '#c01838', 'stroke-width="1.500"');
  line(3, 247.500, right, 247.500, '#d01028');
  out += '<path d="M' + (x0 + 67.500 * step) + ' 3h8l-4 4z" fill="#8090a0"/><path d="M3 414l4 5H3z" fill="#8090a0"/>';
  out += '<path d="M2.500 2.500H' + right + 'V327.500H2.500zM2.500 329.500H' + right + 'V419.500H2.500z" fill="none" stroke="#dfe6fa"/>';
  dates.forEach(function (d, k) {
    var x = x0 + k * 4 * step;
    line(x, 419, x, 423, '#fff');
    text(x - 1, 430, d);
  });
  text(right + 4, 338, '101336');
  text(right + 4, 417, '0');
  rect(right + 1, 183, 34, 9, '#fff'); text(right + 5, 190.500, '105.622', 'tag');
  rect(right + 1, 208, 34, 9, '#f00'); text(right + 5, 215.500, '105.313', 'level');
  rect(right + 1, 242, 34, 9, '#f00'); text(right + 5, 249.500, '104.885', 'level');
  out += '<path d="M5 11l3-3 3 3z" fill="#fff"/>';
  text(15, 12, 'USDJPY,Daily', 'wide');
  text(69, 12, '106.019&#160; 106.036&#160; 105.574&#160; 105.622');
  text(6, 339, 'Volumes 58636');
  svg.innerHTML = out;
}
draw();
window.addEventListener('resize', draw);
```
